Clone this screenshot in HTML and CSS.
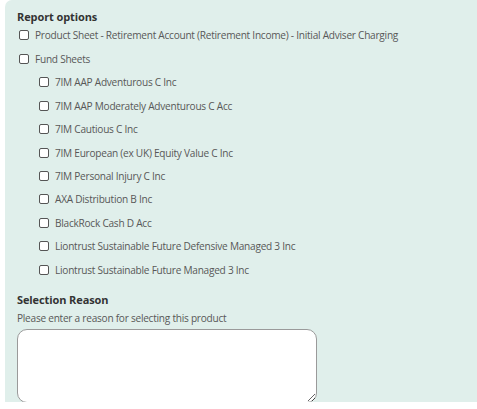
FILE: index.html
```html
<!DOCTYPE html>
<html>
<head>
<meta charset="utf-8">
<link rel="stylesheet" href="styles.css">
</head>
<body>
<div class="panel">
  <h3 class="title">Report options</h3>
  <ul class="list">
    <li class="row"><span class="box"></span><span>Product Sheet - Retirement Account (Retirement Income) - Initial Adviser Charging</span></li>
    <li class="row"><span class="box"></span><span>Fund Sheets</span></li>
  </ul>
  <ul class="list sub">
    <li class="row"><span class="box"></span><span>7IM AAP Adventurous C Inc</span></li>
    <li class="row"><span class="box"></span><span>7IM AAP Moderately Adventurous C Acc</span></li>
    <li class="row"><span class="box"></span><span>7IM Cautious C Inc</span></li>
    <li class="row"><span class="box"></span><span>7IM European (ex UK) Equity Value C Inc</span></li>
    <li class="row"><span class="box"></span><span>7IM Personal Injury C Inc</span></li>
    <li class="row"><span class="box"></span><span>AXA Distribution B Inc</span></li>
    <li class="row"><span class="box"></span><span>BlackRock Cash D Acc</span></li>
    <li class="row"><span class="box"></span><span>Liontrust Sustainable Future Defensive Managed 3 Inc</span></li>
    <li class="row"><span class="box"></span><span>Liontrust Sustainable Future Managed 3 Inc</span></li>
  </ul>
  <h3 class="title reason">Selection Reason</h3>
  <p class="hint">Please enter a reason for selecting this product</p>
  <textarea class="input"></textarea>
</div>
</body>
</html>
```
FILE: styles.css
```css
html, body {
  margin: 0;
  padding: 0;
  background: #ffffff;
}
body {
  font-family: "Open Sans", "Liberation Sans", sans-serif;
  padding-left: 5px;
}
.panel {
  background: #e0efeb;
  border-top-left-radius: 7px;
  padding: 9px 0 0 12px;
  height: 393px;
  overflow: hidden;
}
.title {
  margin: 0;
  font-size: 11px;
  font-weight: 700;
  color: #333333;
  line-height: 15px;
  letter-spacing: -0.1px;
}
.list {
  list-style: none;
  margin: 0;
  padding: 0;
}
.row {
  display: flex;
  align-items: center;
  gap: 6px;
  height: 23.4px;
  font-size: 10.1px;
  letter-spacing: -0.25px;
  color: #585858;
  padding-left: 2px;
}
.list:first-of-type .row:first-child {
  margin-top: -1px;
  margin-bottom: 1px;
}
.sub .row {
  padding-left: 22px;
}
.box {
  width: 8px;
  height: 8px;
  border: 1.2px solid #555555;
  border-radius: 2px;
  background: #ffffff;
  flex: none;
}
.reason {
  margin-top: 11px;
}
.hint {
  margin: 4px 0 0;
  font-size: 10.1px;
  letter-spacing: -0.25px;
  color: #585858;
  line-height: 14px;
}
.input {
  display: block;
  margin-top: 4px;
  width: 300px;
  height: 74px;
  box-sizing: border-box;
  border: 1px solid #9a9a9a;
  border-radius: 10px;
  background: #ffffff;
}
```
